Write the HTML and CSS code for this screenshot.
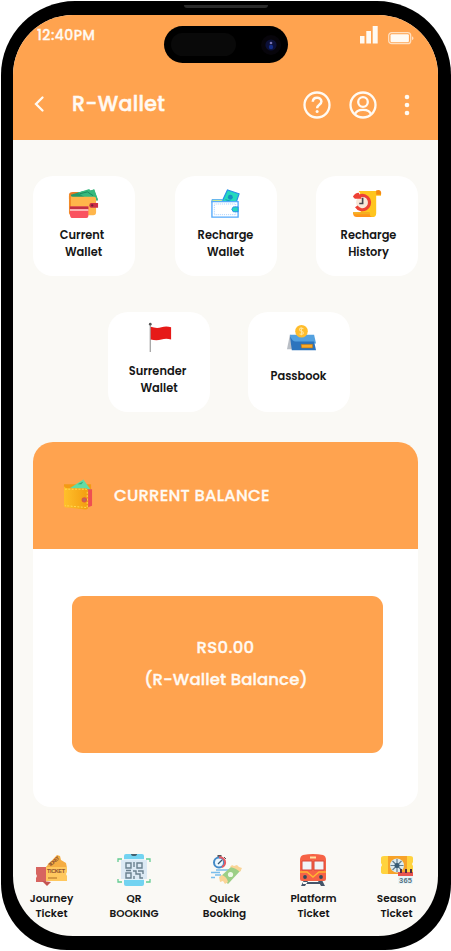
FILE: index.html
```html
<!DOCTYPE html>
<html lang="en">
<head>
<meta charset="utf-8">
<title>R-Wallet</title>
<link rel="stylesheet" href="styles.css">
</head>
<body>
<div class="phone">
  <div class="speaker"></div>
  <div class="notch"><div class="notch-sensor"></div>
    <svg class="lens" viewBox="0 0 20 20"><circle cx="10" cy="10" r="10" fill="#07050b"/><circle cx="10" cy="10" r="5.6" fill="#0c1038"/><circle cx="10" cy="12" r="2.2" fill="#142d88"/><circle cx="10" cy="8" r="1.3" fill="#7774b5"/></svg>
  </div>
  <main class="screen">
    <header class="top">
      <div class="status">
        <span class="time">12:40PM</span>
        <svg class="signal" viewBox="0 0 18 19"><path fill="#fffaf3" d="M0 11h4.5v7.500H0zM6.300 6h4.700v12.500H6.300zM12.700 1h5v17.500h-5z"/></svg>
        <svg class="battery" viewBox="0 0 26 13"><rect x=".7" y=".7" width="22" height="11" rx="3" fill="none" stroke="#ffdfbf" stroke-width="1.300"/><rect x="2.500" y="2.300" width="18.400" height="8" rx="1.200" fill="#fffaf3"/><path d="M24 4.300q3 2 0 4z" fill="#ffdfbf"/></svg>
      </div>
      <div class="titlebar">
        <svg class="back" viewBox="0 0 12 18"><path d="M9.500 2.500 3 9l6.500 6.500" fill="none" stroke="#fffaf3" stroke-width="2.300" stroke-linecap="round"/></svg>
        <h1>R-Wallet</h1>
        <svg class="round-icon" viewBox="0 0 28 28" fill="none" stroke="#fffaf3" stroke-width="2.300"><circle cx="14" cy="14" r="12.500"/><path d="M9.800 10.800c.2-5.600 8.600-5.200 8.600-.2 0 3.200-4.300 3-4.300 6.600" stroke-width="2.500"/><circle cx="14.100" cy="20.600" r="1.500" fill="#fffaf3" stroke="none"/></svg>
        <svg class="round-icon user" viewBox="0 0 28 28" fill="none" stroke="#fffaf3" stroke-width="2.300"><circle cx="14" cy="14" r="12.500"/><circle cx="14" cy="11" r="4.800"/><path d="M6 23.500c1.200-6.300 14.800-6.300 16 0"/></svg>
        <svg class="dots" viewBox="0 0 6 22" fill="#fffaf3"><circle cx="3" cy="3" r="2.300"/><circle cx="3" cy="11" r="2.300"/><circle cx="3" cy="19" r="2.300"/></svg>
      </div>
    </header>

    <section class="actions">
      <div class="row">
        <div class="tile current">
          <svg viewBox="0 0 32 32"><path d="M1 7q0-3 4-3h7v8H1z" fill="#e87927"/><path d="m3 7 13-4 11-1 4 11H4z" fill="#23996b"/><path d="m10 5 12-4 1 2 4-2 4 11-8 1z" fill="#35b97e"/><path d="m12 6 8-2 6 4" fill="none" stroke="#1b875c"/><path d="M1 6q1 3 4 3h22q2 0 2 2v14q0 3-3 3H4q-3 0-3-3z" fill="#ffb64b"/><path d="M1 6v19q0 2 2 3V8z" fill="#f18b28"/><path d="M2 19h19v10q0 2-2 2H5q-3 0-3-4z" fill="#fa5260"/><path d="M2 19h19v3H2z" fill="#c43144"/><path d="M2 22h19v1.500H2z" fill="#ffd5cf"/><path d="M24 15.500h7v5h-7q-2 0-2-2.500t2-2.500z" fill="#cc2f48"/><circle cx="25" cy="18" r="1.200" fill="#6f2036"/></svg>
          <p><span>Current</span><span class="indent">Wallet</span></p>
        </div>
        <div class="tile">
          <svg viewBox="0 0 32 32"><path d="m11 17 7-15 12 4-4 12z" fill="#24d9bd" stroke="#258ee9" stroke-width="1.200"/><circle cx="21" cy="9.500" r="2.500" fill="#168fc3"/><path d="m16 12 9 3" stroke="#168fc3"/><path d="M2 12h11l-1 3H2z" fill="#d9ef83" stroke="#4faaf0"/><path d="M2 14h27v16H2z" fill="#fff" stroke="#54a9fb" stroke-width="1.400"/><path d="M4.500 16.500h22v11h-22z" fill="none" stroke="#a5d0ff" stroke-dasharray="1 1"/><path d="M24 19.500h5v5h-5q-3-2.500 0-5z" fill="#25d9bd" stroke="#258ee9"/></svg>
          <p><span>Recharge</span><span>Wallet</span></p>
        </div>
        <div class="tile history">
          <svg viewBox="0 0 32 32"><path d="M8 3h21q2 1 2 5h-5v18q0 4-4 4H10V9q0-4-2-6z" fill="#ffc51e"/><path d="M26 4q-1-2 2-2 4 0 3 5h-5z" fill="#f58a12"/><path d="M2 25h17q0 5 4 5H6q-4 0-4-5z" fill="#ff961b"/><path d="M2 25h17v2H3z" fill="#f3b022"/><circle cx="12" cy="15" r="6.800" fill="#f8e7da"/><path d="M9 8.200A7.400 7.400 0 1 1 5.500 19" fill="none" stroke="#ee4135" stroke-width="3.200"/><path d="M2 9q2-4 6-4l3 6H4z" fill="#ee4135"/><path d="M12 10v6H8.500" fill="none" stroke="#45434d" stroke-width="1.700"/></svg>
          <p><span>Recharge</span><span>History</span></p>
        </div>
      </div>
      <div class="row second">
        <div class="tile surrender">
          <svg viewBox="0 0 32 32"><path d="M7.500 3v28" stroke="#9a9a9a" stroke-width="1.200"/><circle cx="7.500" cy="2.300" r="1.400" fill="#555"/><path d="M8 5q6 2 11 .5 5-1.500 10 0V18q-5-1.500-10 0-5 1.500-11 0z" fill="#e61a18"/></svg>
          <p><span>Surrender</span><span class="indent">Wallet</span></p>
        </div>
        <div class="tile passbook">
          <svg viewBox="0 0 32 32"><path d="M4 11 1 26h5l2-14z" fill="#b9bec5"/><path d="M4 11h25l2 9H6z" fill="#54a1df"/><path d="M4 12q3 7 7 6h18l2 9H6z" fill="#2c74bd"/><circle cx="16" cy="7.500" r="6.500" fill="#ffbd2c"/><path d="M18 5q-4-2-4 1 0 1 2 1.500t2 2q-1 2-4 .5M16 3.500v8" fill="none" stroke="#ffe49a" stroke-width="1.100"/><path d="M15.500 21h12v3.700H16z" fill="#fda925" stroke="#af721d" stroke-width=".6"/></svg>
          <p><span>Passbook</span></p>
        </div>
      </div>
    </section>

    <section class="balance">
      <div class="balance-head">
        <svg viewBox="0 0 32 32"><defs><linearGradient id="gold"><stop stop-color="#ffc02b"/><stop offset="1" stop-color="#f39c10"/></linearGradient></defs><path d="M1 5h28v6H1z" fill="#f39a15"/><path d="m7 9 14-9 8 11z" fill="#62dca5"/><path d="m15 5 6-3-2 3z" fill="#30a978"/><path d="M25 10h5v17l-5 2z" fill="#ee4f52"/><path d="M1 7q1 2 4 2h18q3 0 3 3v16q0 3-3 3L4 29q-3 0-3-3z" fill="url(#gold)"/><path d="M2 10h21q2 0 2 2v17L2 27" fill="none" stroke="#ffdc52" stroke-dasharray="2 1.500"/><circle cx="22" cy="21" r="2.800" fill="#d95847"/><circle cx="22" cy="21" r="1.100" fill="#a77564"/></svg>
        <h2>CURRENT BALANCE</h2>
      </div>
      <div class="balance-body">
        <div class="amount"><p class="rupees">RS0.00</p><p class="caption">(R-Wallet Balance)</p></div>
      </div>
    </section>

    <nav>
      <a class="journey">
        <svg viewBox="0 0 32 32"><path d="M9 14 21 1l3 1 1 4 5 3 1 5-6 8z" fill="#f5ad42"/><text x="14" y="13" font-size="5" textLength="13" transform="rotate(-40 14 13)" class="ticket-text">TICKET</text><path d="M0 13h10v15H0v-4l1-2-1-2z" fill="#d76560"/><path d="m6 27 5 5 4-4z" fill="#c55550"/><path d="M10 13h21v5l-1 2 1 2v5H10z" fill="#ffc85e"/><text x="11" y="19" font-size="5.500" textLength="18" class="ticket-text">TICKET</text><path d="M12 24h9" stroke="#c88b3a" stroke-width="1.500"/></svg>
        <p><span>Journey</span><span>Ticket</span></p>
      </a>
      <a class="qr">
        <svg viewBox="0 0 32 32"><rect x="6" width="20" height="32" rx="2" fill="#72d3f1"/><path d="M6 5h20v21H6z" fill="#dff2fb"/><path d="M3 6h26v19H3z" fill="#dce9f4"/><path d="M13 0h6q0 2-3 2t-3-2" fill="#42606f"/><path d="M0 8V5h4M28 5h4v3M0 25v3h4M28 28h4v-3" fill="none" stroke="#63cb91" stroke-width="1.300"/><g fill="none" stroke="#69808e" stroke-width="1.400"><path d="M8 9h5v5H8zM19 9h5v5h-5zM8 19h5v5H8zM16 8v5M15 17h3v3h4v4h3M16 22v3M8 16.500h5M20 17h5v3"/></g></svg>
        <p><span>QR</span><span>BOOKING</span></p>
      </a>
      <a class="quick">
        <svg viewBox="0 0 32 32"><path d="M7.500 2h4" stroke="#555" stroke-width="2"/><path d="m14 3 2 2" stroke="#555"/><circle cx="9" cy="8.500" r="5" fill="#edf8ff" stroke="#458bc7" stroke-width="2"/><path d="M9 3.500A5 5 0 0 1 12 13" fill="none" stroke="#e65c64" stroke-width="2"/><path d="m8 10 4-4" stroke="#355873" stroke-width="1.300"/><path d="M6 16h13M1 18.500h9M5 21h6M1 23.500h4" stroke="#79bdec" stroke-width="1.300"/><path d="m10 23 12-11 9 4-13 14z" fill="#9ccf86"/><path d="m9 23 3-2q5 2 6 7l-3 2-2-3-3 1zM20 13l2-2 2 1 3-1 2 2 3 1-2 4q-4-4-10-5z" fill="#fad496"/><circle cx="20.500" cy="20.500" r="2.600" fill="#eff9e7"/></svg>
        <p><span>Quick</span><span>Booking</span></p>
      </a>
      <a class="platform">
        <svg viewBox="0 0 32 32"><path d="m7 26-3 6h4l3-5zm18 0 3 6h-4l-3-5zM6 28h20v2H6z" fill="#455569"/><path d="M6 1q10-2 20 0 3 1 3 5v19q0 2-2 2H5q-2 0-2-2V6q0-4 3-5z" fill="#f66346"/><path d="M5 7h10v9H5zm12 0h10v9H17z" fill="#f1f4f7" stroke="#d84639"/><path d="M3 18h7l6 5 6-5h7" fill="none" stroke="#ffb532" stroke-width="1.600"/><rect x="13" y="2.500" width="6" height="2" fill="#ffe1a0"/><circle cx="8" cy="23" r="1.900" fill="#354a5c"/><circle cx="24" cy="23" r="1.900" fill="#354a5c"/></svg>
        <p><span>Platform</span><span>Ticket</span></p>
      </a>
      <a class="season">
        <svg viewBox="0 0 32 32"><path d="M0 4q0-2 3-2h26q3 0 3 2v4l-1 2 1 2v8H3q-3 0-3-2v-5l1-2-1-2z" fill="#ffd33e"/><path d="M7 2h19v18H7z" fill="#f7a329"/><circle cx="16" cy="11.500" r="7" fill="#dcecf1"/><path d="M16 5v13M9.500 11.500h13M11.500 7l9 9m0-9-9 9" stroke="#637f91" stroke-width="1.200"/><circle cx="16" cy="11.500" r="2.500" fill="#365b74"/><path d="M17 20h15v10H17z" fill="#e9f4f7"/><path d="M17 18h15v4H17z" fill="#e8544f"/><path d="M20 15v4m5-4v4m5-4v4" stroke="#4c3141" stroke-width="2"/><text x="18" y="29" font-size="7.500" textLength="13" class="days-text">365</text></svg>
        <p><span>Season</span><span>Ticket</span></p>
      </a>
    </nav>
  </main>
</div>
</body>
</html>
```
FILE: styles.css
```css
* { box-sizing: border-box; }
body { margin: 0; background: #fff; font-family: Poppins, Inter, "Open Sans", sans-serif; color: #161616; }
h1, h2, p { margin: 0; font-weight: 600; }
svg { display: block; flex: none; overflow: visible; }
.phone { position: relative; width: 450px; height: 949px; margin: 1px 0 0 .5px; padding: 14px 12.5px; background: #000; border-radius: 74px 74px 66px 66px; }
.screen { height: 921px; border-radius: 60px; overflow: hidden; background: #faf9f5; display: flex; flex-direction: column; }
.speaker { position: absolute; left: 183px; top: 4px; width: 84px; height: 3px; border-radius: 0 0 4px 4px; background: #2b2b2b; }
.notch { position: absolute; left: 163.500px; top: 25px; width: 124px; height: 37px; border-radius: 19px; background: #000; }
.notch-sensor { margin: 7px 0 0 7px; width: 65px; height: 23px; border-radius: 12px; background: #090909; }
.lens { position: absolute; left: 97px; top: 9px; width: 20px; height: 20px; }
.top { height: 125px; flex: none; background: #ffa34f; color: #fffaf3; }
.status { height: 40px; padding: 9px 24px 0; display: flex; align-items: flex-start; }
.time { font-size: 14px; line-height: 22px; font-weight: 500; margin: 0 auto 0 0; letter-spacing: .45px; -webkit-text-stroke: .3px; }
.signal { width: 18px; height: 19px; margin: 1px 10px 0 0; }
.battery { width: 26px; height: 13px; margin-top: 8px; }
.titlebar { height: 50px; margin-top: 25px; padding: 0 28px 0 20px; display: flex; align-items: center; }
.back { width: 12px; height: 18px; margin: -3px 27px 0 0; }
h1 { font-size: 20.500px; font-weight: 500; line-height: 28px; margin: -2px auto 0 0; letter-spacing: .35px; -webkit-text-stroke: .5px; }
.round-icon { width: 28px; height: 28px; }
.user { margin-left: 18.500px; }
.dots { width: 6px; height: 22px; margin-left: 27px; }
.actions { padding: 36px 20px 0; }
.row { display: flex; justify-content: space-between; }
.second { margin-top: 36px; justify-content: center; gap: 38px; padding-left: 7px; }
.tile { width: 102px; height: 100px; border-radius: 20px; background: #fff; display: flex; flex-direction: column; align-items: center; padding-top: 12px; }
.tile svg { width: 31px; height: 31px; }
.tile p { margin-top: 7.500px; font-size: 11.400px; line-height: 17px; }
p span { display: block; text-align: center; white-space: nowrap; }
.indent { padding-left: 3px; }
.current svg { margin-left: -2px; }
.current p { margin-left: -4px; }
.history p { margin-left: 3px; }
.history svg { margin-left: -1px; }
.second .tile { padding-top: 10px; }
.second .tile p { margin-top: 9.500px; margin-left: -3px; }
.surrender svg { margin-left: -2px; }
.second .passbook svg { margin: 2px 0 0 4px; }
.second .passbook p { margin: 12.500px 0 0 -1px; }
.balance { margin: 30px 20px 0; height: 365px; border-radius: 20px 20px 18px 18px; overflow: hidden; background: #fff; }
.balance-head { height: 106.500px; background: #ffa34f; display: flex; align-items: center; padding-left: 30px; }
.balance-head svg { width: 31px; height: 32px; margin-top: -1px; }
h2 { margin: 2px 0 0 20px; color: #fffaf3; font-size: 16.400px; font-weight: 500; line-height: 24px; letter-spacing: .24px; -webkit-text-stroke: .3px; }
.balance-body { padding: 47.500px 35px 0 39px; }
.amount { height: 157px; padding-top: 36px; border-radius: 11px; background: #ffa34f; color: #fffaf3; text-align: center; font-size: 16.500px; line-height: 32px; }
.amount p { margin-right: 4px; font-weight: 500; letter-spacing: .3px; -webkit-text-stroke: .35px; }
.amount .caption { letter-spacing: .12px; margin-right: 3px; }
nav { display: flex; justify-content: center; gap: 15px; margin-top: 46.500px; padding-right: 3px; }
nav a { width: 72px; display: flex; flex-direction: column; align-items: center; }
nav .journey { padding-left: 3px; }
nav .qr { padding-right: 6px; }
nav .quick { padding-left: 1px; }
nav .platform { padding-left: 5px; }
nav .season { padding-right: 3px; }
nav svg { width: 32px; height: 32px; }
nav .qr svg { margin-left: -1px; }
nav .quick svg { margin-left: 2px; }
nav .platform svg { margin-left: -1px; }
nav p { margin-top: 5.500px; font-size: 10.500px; line-height: 15px; }
.ticket-text { font-family: "Liberation Sans", sans-serif; font-weight: 700; fill: #8f5130; }
.days-text { font-family: "Liberation Sans", sans-serif; font-weight: 700; fill: #577282; }
```
